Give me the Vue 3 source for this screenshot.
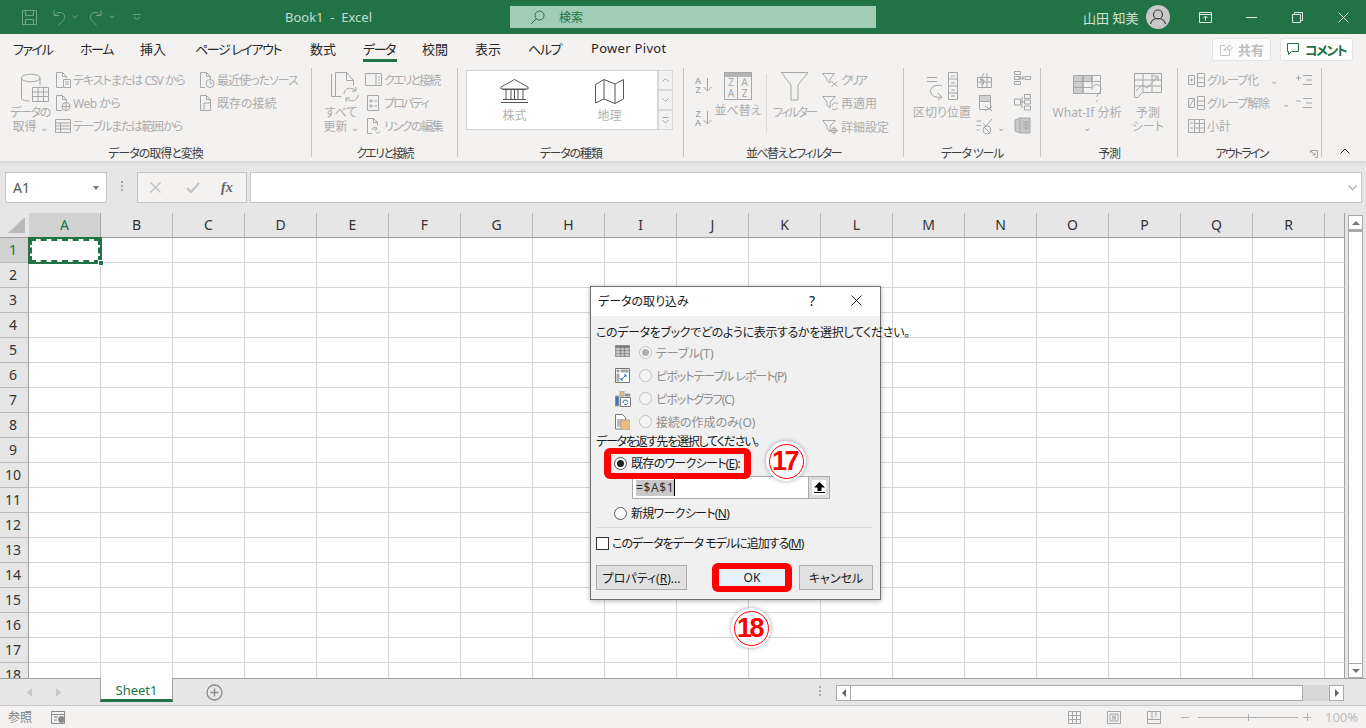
<script setup>
const cols = ['A','B','C','D','E','F','G','H','I','J','K','L','M','N','O','P','Q','R']
const rows = Array.from({ length: 18 }, (_, i) => i + 1)
const tabs = [
  { t: 'ファイル', w: 67, c: 'k15' }, { t: 'ホーム', w: 60, c: 'k15' }, { t: '挿入', w: 55, c: '' }, { t: 'ページ レイアウト', w: 115, c: 'k15' },
  { t: '数式', w: 53, c: '' }, { t: 'データ', w: 59, c: 'k15' }, { t: '校閲', w: 53, c: '' }, { t: '表示', w: 53, c: '' }, { t: 'ヘルプ', w: 63, c: 'k15' }, { t: 'Power Pivot', w: 80, c: 'lat' }
]
</script>

<template>
  <div class="app">
    <header class="title">
      <svg class="qs" width="17" height="17" viewBox="0 0 17 17"><path d="M1.5 1.5h14v14h-14zM4.500 1.500v5h8v-5M4.500 15.500v-5h8v5"/></svg>
      <svg class="qs m13" width="16" height="17" viewBox="0 0 16 17"><path d="M3 1.500v5h5M3.500 6.500C6 3 10 2.500 12.500 5c2.500 3 1 6.500-5 11"/></svg>
      <svg class="cv m4" width="6" height="4" viewBox="0 0 6 4"><path d="M.5.5 3 3 5.500.5"/></svg>
      <svg class="qs m10" width="16" height="17" viewBox="0 0 16 17"><path d="M13 1.500v5H8M12.500 6.500C10 3 6 2.500 3.500 5c-2.500 3-1 6.500 5 11"/></svg>
      <svg class="cv m4" width="6" height="4" viewBox="0 0 6 4"><path d="M.5.5 3 3 5.500.5"/></svg>
      <svg class="cv qat" width="8" height="6" viewBox="0 0 8 6"><path d="M.5.500h7M1 3l3 2.500L7 3"/></svg>
      <span class="book">Book1 &nbsp;-&nbsp; Excel</span>
      <div class="search">
        <svg width="15" height="15" viewBox="0 0 15 15"><circle cx="9.500" cy="5.500" r="4.500"/><path d="M6.300 8.700 1 14"/></svg>
        <span>検索</span>
      </div>
      <span class="user">山田 知美</span>
      <span class="avatar"><svg width="24" height="24" viewBox="0 0 24 24"><circle cx="12" cy="9.500" r="4.500"/><path d="M4.500 19c1-4 4-5.500 7.500-5.500s6.500 1.500 7.500 5.500"/></svg></span>
      <svg class="win w1" width="13" height="11" viewBox="0 0 13 11"><path d="M.5.500h12v10H.5zM.5 2.500h12M6.500 8.500v-4M4.500 6l2-2 2 2"/></svg>
      <svg class="win w2" width="11" height="11" viewBox="0 0 11 11"><path d="M0 5.500h11"/></svg>
      <svg class="win w3" width="11" height="11" viewBox="0 0 11 11"><path d="M.5 2.500h8v8h-8zM2.500 2.500v-2h8v8h-2"/></svg>
      <svg class="win w4" width="11" height="11" viewBox="0 0 11 11"><path d="M.5.500l10 10M10.500.500l-10 10"/></svg>
    </header>

    <nav class="tabs">
      <span v-for="(tab, i) in tabs" :key="tab.t" class="tab" :class="{ on: i === 5 }" :style="{ width: tab.w + 'px' }"><span class="tabt" :class="tab.c">{{ tab.t }}</span></span>
      <span class="grow"></span>
      <button class="share"><svg width="14" height="13" viewBox="0 0 14 13"><path d="M6 2.500H1.500v10h9V8M5 8c.5-3 3-4 5-4V1.500l3.500 3.500L10 8V6C8 6 6 6.500 5 8z"/></svg>共有</button>
      <button class="comment"><svg width="13" height="13" viewBox="0 0 13 13"><path d="M.5.500h11v8H4.500L1.500 11.500v-3h-1z"/></svg><span class="ct">コメント</span></button>
    </nav>

    <section class="ribbon">
      <div class="grp g1">
        <div class="body">
          <div class="big b1">
            <svg width="30" height="32" viewBox="0 0 30 32"><path d="M1.500 6v20c0 2 4 3 8 3M20 6v7M1.500 6c0-5 18.500-5 18.500 0s-18.500 5-18.500 0z"/><path d="M12.500 15.500h16v14h-16zM12.500 20h16M12.500 24.500h16M18 15.500v14M23.500 15.500v14"/></svg>
            <span class="k15">データの</span><span>取得 <i class="car">⌄</i></span>
          </div>
          <div class="col c1">
            <div class="rw k1"><svg width="16" height="16" viewBox="0 0 16 16"><path d="M8 15.500H1.500V.5h6l4 4v2M7.500.5v4h4M8.500 7.500h7v8h-7zM10 10h4M10 12h4"/></svg>テキストまたは CSV から</div>
            <div class="rw k05"><svg width="16" height="16" viewBox="0 0 16 16"><path d="M7 15.500H1.500V.5h6l4 4v3M7.500.5v4h4"/><circle cx="11" cy="11.500" r="4"/><path d="M7 11.500h8M11 7.500v8"/></svg>Web から</div>
            <div class="rw k15"><svg width="16" height="16" viewBox="0 0 16 16"><path d="M.5 1.500h15v13H.5zM.5 5h15M.5 8h15M.5 11h15M5.500 5v9.500"/></svg>テーブルまたは範囲から</div>
          </div>
          <div class="col c2">
            <div class="rw k1"><svg width="16" height="16" viewBox="0 0 16 16"><path d="M6 15.500H1.500V.5h6l4 4v3M7.500.5v4h4"/><circle cx="11" cy="11.500" r="4"/><path d="M11 9v2.500h2"/></svg>最近使ったソース</div>
            <div class="rw"><svg width="16" height="16" viewBox="0 0 16 16"><path d="M1.500 15.500V.5h6l4 4v11zM7.500.5v4h4M5 15.500V8h6.500"/></svg>既存の接続</div>
          </div>
        </div>
        <div class="lbl l1">データの取得と変換</div>
      </div>

      <div class="grp g2">
        <div class="body">
          <div class="big b2">
            <svg width="30" height="31" viewBox="0 0 30 31"><path d="M1.500 1.500v23H11M5.500 25V.5h11l7 8v5M16.500.5v8h7"/><path d="M14 22c0-6 8-8 12-3M28 23c0 6-8 8-12 3M26 15v4h-4M16 30v-4h4"/></svg>
            <span>すべて</span><span>更新 <i class="car">⌄</i></span>
          </div>
          <div class="col c3">
            <div class="rw k2"><svg width="17" height="14" viewBox="0 0 17 14"><path d="M.5.500h16v12H.5zM11 .5v12M13 4h2M13 7h2M13 10h2"/></svg>クエリと接続</div>
            <div class="rw k2"><svg width="17" height="16" viewBox="0 0 17 16"><path d="M2.500.5h11v15h-11zM5 5h2v2H5zM5 10h2v2H5zM9 6h3M9 11h3"/></svg>プロパティ</div>
            <div class="rw k15"><svg width="17" height="16" viewBox="0 0 17 16"><path d="M7 15.500H2.500V.5h6l4 4v3M8.500.5v4h4M7 12c0-3 3-3 4-1M15 13c0 2-3 3-4 1M9 9.500c2-1 3 0 3 1.500s-3 2-3 0"/></svg>リンクの編集</div>
          </div>
        </div>
        <div class="lbl l2">クエリと接続</div>
      </div>

      <div class="grp g3">
        <div class="body">
          <div class="gallery">
            <div class="gitems">
              <div class="gitem">
                <svg width="29" height="25" viewBox="0 0 29 25"><path d="M14.500.5 1 8v2h27V8zM3 10.500h23M6 11v9M11 11v9M14.500 11v9M18 11v9M23 11v9M3 20.500h23M1 23.500h27"/></svg>
                <span>株式</span>
              </div>
              <div class="gitem">
                <svg width="29" height="25" viewBox="0 0 29 25"><path d="M.5 5.500 9 .5 20 5l8.500-4.500V20L20 24.500 9 20 .5 24zM9 .5V20M20 5v19.500"/></svg>
                <span>地理</span>
              </div>
            </div>
            <div class="gscroll">
              <span><svg width="7" height="4" viewBox="0 0 7 4"><path d="M.5 3.500l3-3 3 3"/></svg></span>
              <span><svg width="7" height="4" viewBox="0 0 7 4"><path d="M.5.5l3 3 3-3"/></svg></span>
              <span><svg width="7" height="7" viewBox="0 0 7 7"><path d="M.5.5h6M.5 3l3 3 3-3"/></svg></span>
            </div>
          </div>
        </div>
        <div class="lbl">データの種類</div>
      </div>

      <div class="grp g4">
        <div class="body">
          <div class="azcol">
            <div class="az"><span class="azt">A<br>Z</span><svg width="9" height="14" viewBox="0 0 9 14"><path d="M4.500 0v13M.5 9l4 4 4-4"/></svg></div>
            <div class="az"><span class="azt">Z<br>A</span><svg width="9" height="14" viewBox="0 0 9 14"><path d="M4.500 0v13M.5 9l4 4 4-4"/></svg></div>
          </div>
          <div class="big b3">
            <span class="sorti"><span class="st"></span><span class="sg"><b>Z</b><b>A</b><b>A</b><b>Z</b></span></span>
            <span>並べ替え</span>
          </div>
          <span class="vsep"></span>
          <div class="big b4">
            <svg width="28" height="29" viewBox="0 0 28 29"><path d="M.5.500h26.500L17 13v15h-7V13z"/></svg>
            <span class="k2">フィルター</span>
          </div>
          <div class="col c4">
            <div class="rw k25"><svg width="17" height="16" viewBox="0 0 17 16"><path d="M.5 1.500h12L8 7v4L5 8.500V7zM9.500 9.500l6 5M15.500 9.500l-6 5"/></svg>クリア</div>
            <div class="rw"><svg width="17" height="16" viewBox="0 0 17 16"><path d="M.5 1.500h13L8 7v6L5 10V7zM10 11c0-3 4-4 6-2M15.500 13c-1 2-4 2-5.500 1"/></svg>再適用</div>
            <div class="rw"><svg width="17" height="16" viewBox="0 0 17 16"><path d="M.5 1.500h13L8 7v6L5 10V7z"/><circle cx="12" cy="11.500" r="2.500"/><path d="M12 7.500v8M8 11.500h8"/></svg>詳細設定</div>
          </div>
        </div>
        <div class="lbl l4">並べ替えとフィルター</div>
      </div>

      <div class="grp g5">
        <div class="body">
          <div class="big b5">
            <svg width="32" height="29" viewBox="0 0 32 29"><path d="M1 5.500h10M1 9.500h10M22.500.5h9v27h-9zM22.500 7h9M22.500 14h9M22.500 21h9M25 4h4M25 11h4M25 18h4M25 24h4M16 14c-7-2-13 1-11 7 1 3 5 5 10 4M12 21l4 4-4 3"/></svg>
            <span>区切り位置</span>
          </div>
          <div class="icol ic1">
            <div class="ir"><svg width="17" height="16" viewBox="0 0 17 16"><path d="M1.500 5.500h14v10h-14zM1.500 10h14M6 5.500v10M11 1v14.500M8 1 4 8h4l-1 5"/></svg></div>
            <div class="ir"><svg width="17" height="17" viewBox="0 0 17 17"><path d="M3.500.5h11v14h-11z"/><path fill="#cfcfcf" d="M3.500.5h11v6h-11z"/><path d="M9 11l7 5M16 11l-7 5"/></svg></div>
            <div class="ir"><svg width="17" height="17" viewBox="0 0 17 17"><path d="M.5 3h5M.5 7.500h5M.5 12h3M7 5l3 3 6-7"/><circle cx="11" cy="12" r="4"/><path d="M8 9l6 6"/></svg><i class="car c5">⌄</i></div>
          </div>
          <div class="icol ic2">
            <div class="ir"><svg width="17" height="15" viewBox="0 0 17 15"><path d="M.5.5h6v3h-6zM.5 5.500h6v3h-6zM.5 10.500h6v3h-6zM11 5.500h5.500v3H11zM4 7h6M8 5l2 2-2 2"/></svg></div>
            <div class="ir"><svg width="17" height="17" viewBox="0 0 17 17"><path d="M.5 5h6v6h-6zM10.500.5h6v4h-6zM10.500 6h6v4h-6zM10.500 12h6v4h-6zM6.500 8h4M8 3v11"/></svg></div>
            <div class="ir"><svg width="17" height="17" viewBox="0 0 17 17"><path fill="#c9c9c9" d="M1 3l5-2h10v15H6l-5-2z"/><path d="M6 1v15M9 5h6M9 8h6M9 11h6M12 5v8"/></svg></div>
          </div>
        </div>
        <div class="lbl">データ ツール</div>
      </div>

      <div class="grp g6">
        <div class="body">
          <div class="big b6">
            <svg width="30" height="28" viewBox="0 0 30 28"><path fill="#cdcdcd" d="M.5.500h9.500v18H.5zM10 .5h9v6h-9z"/><path d="M.5.500h27v18H.5zM.5 6.500h27M.5 12.500h18M10 .5v18M19 .5v11"/><path d="M19 15c0-7 9-7 9-1 0 4-4 4-4 8M24 25v2"/></svg>
            <span>What-If 分析</span><span class="car2">⌄</span>
          </div>
          <div class="big b7">
            <svg width="28" height="26" viewBox="0 0 28 26"><path d="M.5.500h27v19H8l-4 5H.5zM.5 7h27M.5 13h27M9 .5v19M18 .5v19"/><path d="M2 18l6-6 5 3 11-12M19 3h5v5"/></svg>
            <span>予測</span><span>シート</span>
          </div>
        </div>
        <div class="lbl">予測</div>
      </div>

      <div class="grp g7">
        <div class="body">
          <div class="col c7">
            <div class="rw k1"><svg width="17" height="16" viewBox="0 0 17 16"><path d="M.5 3.500h6v9h-6zM2 8h3M3.500 6.500v3M9.500 1.500h7v13h-7zM9.500 6h7M9.500 10.500h7"/></svg>グループ化<i class="car c6">⌄</i></div>
            <div class="rw k1"><svg width="17" height="16" viewBox="0 0 17 16"><path d="M.5 3.500h6v9h-6zM1 12l5-8M9.500 1.500h7v13h-7zM9.500 6h7M9.500 10.500h7"/></svg>グループ解除<i class="car c6">⌄</i></div>
            <div class="rw"><svg width="17" height="16" viewBox="0 0 17 16"><path d="M.5 1.500h6v13h-6zM2 5h3M2 10h3M6.500 5.500h10v9h-10zM6.500 10h10M11.500 1.500v13M6.500 1.500h10v4"/></svg>小計</div>
          </div>
          <div class="icol ic3">
            <div class="ir"><svg width="16" height="12" viewBox="0 0 16 12"><path d="M0 4h5M2.500 1.500v5M7 1.500h9M10 6h6M7 10.500h9"/></svg></div>
            <div class="ir"><svg width="16" height="12" viewBox="0 0 16 12"><path d="M0 4h5M7 1.500h9M10 6h6M7 10.500h9"/></svg></div>
          </div>
        </div>
        <div class="lbl l7">アウトライン<svg class="launch" width="8" height="8" viewBox="0 0 8 8"><path d="M.5 3V.5h7v7H5M1 1l4 4M5 2.500V5H2.500"/></svg></div>
      </div>
      <div class="collapse"><svg width="10" height="6" viewBox="0 0 10 6"><path d="M.5 5.500 5 1l4.500 4.500"/></svg></div>
    </section>

    <section class="fbar">
      <div class="namebox"><span>A1</span><i class="tri"></i></div>
      <div class="vdots"><i></i><i></i><i></i></div>
      <div class="fbtns">
        <svg width="11" height="11" viewBox="0 0 11 11"><path d="M.5.500l10 10M10.500.500l-10 10"/></svg>
        <svg class="ck" width="14" height="11" viewBox="0 0 14 11"><path d="M1 6l4 4 8-9"/></svg>
        <span class="fx">fx</span>
      </div>
      <div class="finput"><svg width="9" height="6" viewBox="0 0 9 6"><path d="M.5.500l4 4 4-4"/></svg></div>
    </section>

    <section class="work">
      <div class="grid">
        <div class="chead">
          <div class="corner"><i></i></div>
          <div v-for="c in cols" :key="c" class="ch" :class="{ sel: c === 'A' }">{{ c }}</div>
          <div class="ch end"></div>
        </div>
        <div v-for="r in rows" :key="r" class="row">
          <div class="rh" :class="{ sel: r === 1 }">{{ r }}</div>
          <div v-for="c in cols" :key="c" class="cell">
            <div v-if="r === 1 && c === 'A'" class="active"><i></i></div>
          </div>
          <div class="cell end"></div>
        </div>
      </div>
      <div class="vscroll">
        <span class="sbtn"><i class="up"></i></span>
        <span class="strack"></span>
        <span class="sbtn"><i class="dn"></i></span>
      </div>
    </section>

    <section class="tabbar">
      <svg class="nav n1" width="5" height="9" viewBox="0 0 5 9"><path d="M5 0v9L0 4.500z"/></svg>
      <svg class="nav n2" width="5" height="9" viewBox="0 0 5 9"><path d="M0 0v9l5-4.500z"/></svg>
      <div class="sheettab">Sheet1</div>
      <svg class="add" width="17" height="17" viewBox="0 0 17 17"><circle cx="8.500" cy="8.500" r="7.500"/><path d="M8.500 4.500v8M4.500 8.500h8"/></svg>
      <span class="grow"></span>
      <div class="vdots hd"><i></i><i></i><i></i></div>
      <div class="hscroll">
        <span class="hbtn"><i class="lf"></i></span>
        <span class="hthumb"></span>
        <span class="htrack"></span>
        <span class="hbtn"><i class="rt"></i></span>
      </div>
    </section>

    <footer class="status">
      <span class="ref">参照</span>
      <svg class="macro" width="15" height="13" viewBox="0 0 15 13"><path d="M.5.500h13v12H.5zM.5 3.500h13M3 6h4M3 9h3"/><circle cx="10.500" cy="8.500" r="3" fill="#8a8a8a"/></svg>
      <span class="grow"></span>
      <svg width="13" height="13" viewBox="0 0 13 13"><path d="M.5.500h12v12H.5zM.5 4.500h12M.5 8.500h12M4.500.5v12M8.500.5v12"/></svg>
      <svg class="mv" width="14" height="13" viewBox="0 0 14 13"><path d="M.5.500h13v12H.5zM3 3h8v7H3zM5 5h4M5 6.500h4M5 8h4"/></svg>
      <svg class="mv" width="14" height="13" viewBox="0 0 14 13"><path d="M.5.500h13v12H.5zM.5 8.500h13M5 .5v8M9 .5v5"/></svg>
      <div class="zoom">
        <i class="minus"></i>
        <span class="slider"><i></i></span>
        <i class="plus"></i>
      </div>
      <span class="pct">100%</span>
    </footer>

    <div class="dialog">
      <div class="dtitle">
        <span class="dt">データの取り込み</span>
        <span class="grow"></span>
        <span class="q">?</span>
        <svg width="11" height="11" viewBox="0 0 11 11"><path d="M.5.500l10 10M10.500.500l-10 10"/></svg>
      </div>
      <div class="dbody">
        <p class="dp first">このデータをブックでどのように表示するかを選択してください。</p>
        <div class="opt">
          <svg width="15" height="12" viewBox="0 0 15 12"><path fill="#767676" d="M0 0h15v12H0z"/><path fill="#f0f0f0" d="M1 3h4v2H1zM6 3h3v2H6zM10 3h4v2h-4zM1 6h4v2H1zM6 6h3v2H6zM10 6h4v2h-4zM1 9h4v2H1zM6 9h3v2H6zM10 9h4v2h-4z"/></svg>
          <span class="rad dis chk"></span><span>テーブル(T)</span>
        </div>
        <div class="opt k1">
          <svg width="15" height="15" viewBox="0 0 15 15"><path fill="#fff" stroke="#767676" d="M.5.500h14v14H.5z"/><path fill="#a8a8a8" d="M2 2h2v2H2zM6 2h7v2H6zM2 6h2v7H2z"/><path fill="none" stroke="#2b6cb0" d="M6 12l5-5M9 7h2v2M6 10v2h2"/></svg>
          <span class="rad dis"></span><span>ピボットテーブル レポート(P)</span>
        </div>
        <div class="opt k1">
          <svg width="16" height="16" viewBox="0 0 16 16"><path fill="#e8bf7a" d="M5 0h4v5H5z"/><path fill="#3f74b5" d="M0 5h4v10H0z"/><path fill="#767676" d="M10 3h5v2h-5z"/><path fill="#fff" stroke="#767676" d="M5.500 6.500h10v9h-10z"/><path fill="none" stroke="#2b6cb0" d="M8 12a2.500 2.500 0 0 1 5-1M13 12a2.500 2.500 0 0 1-4 1"/></svg>
          <span class="rad dis"></span><span>ピボットグラフ(C)</span>
        </div>
        <div class="opt">
          <svg width="15" height="16" viewBox="0 0 15 16"><path fill="#fff" stroke="#767676" d="M.5.500h7l3 3V15H.5z"/><path stroke="#767676" d="M2 6h6M2 8h6M2 10h6M2 12h5"/><path fill="#e8bf7a" d="M6 6h9v10H6z"/></svg>
          <span class="rad dis"></span><span>接続の作成のみ(O)</span>
        </div>
        <p class="dp second">データを返す先を選択してください。</p>
        <div class="sel1">
          <span class="rad chk2"></span><span>既存のワークシート(<u>E</u>):</span>
          <span class="redbox rb1"></span>
        </div>
        <div class="refinput">
          <div class="ri"><span class="hl">=$A$1</span><i class="caret"></i></div>
          <div class="rbtn"><span><svg width="11" height="11" viewBox="0 0 11 11"><path fill="#000" d="M5.500 0 11 5.500H7.500V9h-4V5.500H0zM0 10h11v1H0z"/></svg></span></div>
        </div>
        <div class="sel2">
          <span class="rad"></span><span>新規ワークシート(<u>N</u>)</span>
        </div>
        <div class="divider"></div>
        <div class="cb"><span class="box"></span><span>このデータをデータ モデルに追加する(<u>M</u>)</span></div>
        <div class="btns">
          <button class="btn b-prop">プロパティ(<u>R</u>)...</button>
          <button class="btn b-ok">OK<span class="redbox rb2"></span></button>
          <button class="btn b-cancel">キャンセル</button>
        </div>
      </div>
    </div>

    <div class="mark m17"><span class="ring">17</span></div>
    <div class="mark m18"><span class="ring">18</span></div>
  </div>
</template>

<style>
html, body { margin: 0; padding: 0; overflow: hidden; }
</style>

<style scoped>
.app { width: 1366px; height: 728px; position: relative; overflow: hidden; background: #e6e6e6; display: flex; flex-direction: column; font-family: "Noto Sans", "Noto Sans CJK JP", sans-serif; font-feature-settings: "palt"; font-size: 12px; color: #262626; }
i { font-style: normal; display: block; }
.grow { flex: 1; }
svg { flex: none; display: block; fill: none; stroke: #a6a6a6; stroke-width: 1; }
.k05 { letter-spacing: -.5px; }
.k1 { letter-spacing: -1px; }
.k15 { letter-spacing: -1.400px; }
.k2 { letter-spacing: -1.900px; }
.k25 { letter-spacing: -2.500px; }
.lat { letter-spacing: .3px; }

.title { height: 34px; flex: none; background: #217346; display: flex; align-items: center; padding-left: 21px; color: #c3dccf; }
.title svg { stroke: #6ea58a; }
.m13 { margin-left: 13px; }
.m4 { margin-left: 5px; }
.m10 { margin-left: 10px; }
.qat { margin-left: 18px; }
.book { width: 372px; margin-left: -3px; text-align: right; padding-right: 138px; box-sizing: border-box; font-size: 13px; white-space: nowrap; }
.search { width: 366px; height: 22px; background: #a0cdb3; display: flex; align-items: center; padding-left: 20px; box-sizing: border-box; color: #217346; font-size: 12px; }
.title .search svg { stroke: #217346; margin-right: 14px; }
.user { margin-left: 207px; font-size: 13px; width: 52px; white-space: nowrap; color: #d2e4da; }
.avatar { width: 24px; height: 24px; border-radius: 50%; background: #c8c8c8; margin-left: 11px; }
.title .avatar svg { stroke: #444; stroke-width: 1.200; }
.title .win { stroke: #dfece5; }
.w1 { margin-left: 29px; }
.w2 { margin-left: 34px; }
.w3 { margin-left: 35px; }
.w4 { margin-left: 35px; }

.tabs { height: 32px; flex: none; background: #f3f2f1; display: flex; padding-right: 13px; font-size: 13px; align-items: stretch; }
.tab { flex: none; padding-left: 13px; box-sizing: border-box; white-space: nowrap; padding-top: 5px; color: #262626; }
.tabt { display: inline-block; height: 23px; }
.tab.on .tabt { border-bottom: 3px solid #217346; box-sizing: border-box; color: #262626; width: 34px; }
.share, .comment { font: inherit; font-weight: 700; font-feature-settings: "palt"; height: 23px; margin-top: 4px; padding: 0; display: flex; align-items: center; justify-content: center; gap: 5px; box-sizing: border-box; border: 1px solid #e3e3e3; background: #fbfbfb; border-radius: 2px; }
.share { width: 59px; color: #bdbdbd; margin-right: 9px; }
.share svg { stroke: #c4c4c4; }
.comment { width: 73px; color: #217346; background: #fff; }
.comment svg { stroke: #217346; }
.ct { letter-spacing: -1.500px; }

.ribbon { height: 95px; flex: none; background: #f3f2f1; display: flex; padding-top: 2px; box-sizing: border-box; color: #acacac; box-shadow: 0 2px 3px rgba(0,0,0,.08); position: relative; z-index: 1; }
.grp { height: 89px; flex: none; display: flex; flex-direction: column; border-right: 1px solid #c6c6c6; box-sizing: border-box; }
.g1 { width: 312px; }
.g2 { width: 146px; }
.g3 { width: 226px; }
.g4 { width: 220px; }
.g5 { width: 137px; }
.g6 { width: 137px; }
.g7 { width: 144px; }
.body { height: 74px; flex: none; display: flex; align-items: flex-start; white-space: nowrap; }
.lbl { height: 16px; flex: none; line-height: 16px; color: #3f3f3f; text-align: center; margin-top: 4px; position: relative; white-space: nowrap; letter-spacing: -1.200px; }
.l1 { letter-spacing: -1px; }
.l2 { letter-spacing: -1.700px; }
.l4 { letter-spacing: -1.500px; }
.l7 { letter-spacing: -1.800px; padding-right: 16px; }
.launch { position: absolute; right: 3px; top: 4px; }
.big { display: flex; flex-direction: column; align-items: center; line-height: 14px; flex: none; padding-top: 4px; box-sizing: border-box; }
.big svg, .sorti { margin-bottom: 5px; }
.b1 { width: 42px; margin-left: 9px; }
.b1 svg { margin-left: 10px; margin-bottom: 2px; }
.b2 { width: 38px; margin-left: 10px; }
.b2 svg { margin-left: 8px; margin-bottom: 3px; }
.car { display: inline-block; font-size: 10px; line-height: 8px; }
.col { display: flex; flex-direction: column; flex: none; }
.rw { height: 23px; display: flex; align-items: center; gap: 2px; white-space: nowrap; position: relative; }
.rw svg { stroke: #a8a8a8; }
.c1 { margin-left: 4px; width: 144px; }
.c2 { margin-left: 0; }
.c3 { margin-left: 5px; }
.gallery { display: flex; margin: 2px 0 0 8px; }
.gitems { width: 192px; height: 60px; background: #fff; border: 1px solid #d3d3d3; box-sizing: border-box; display: flex; }
.gitem { width: 95px; display: flex; flex-direction: column; align-items: center; padding-top: 8px; color: #b2b2b2; line-height: 14px; gap: 5px; }
.gitem svg { stroke: #555; }
.gscroll { width: 15px; display: flex; flex-direction: column; }
.gscroll span { height: 20px; border: 1px solid #d8d8d8; background: #f3f2f1; box-sizing: border-box; display: flex; align-items: center; justify-content: center; }
.azcol { margin: 8px 0 0 11px; display: flex; flex-direction: column; gap: 15px; width: 17px; }
.az { display: flex; align-items: center; gap: 2px; }
.azt { font-size: 9px; line-height: 9px; font-weight: 600; color: #a8a8a8; width: 8px; text-align: center; }
.b3 { width: 44px; margin-left: 4px; }
.sorti { width: 28px; height: 28px; margin-bottom: 4px; border: 1px solid #a8a8a8; box-sizing: border-box; display: flex; flex-direction: column; flex: none; }
.st { height: 4px; background: #b4b4b4; flex: none; }
.sg { display: grid; grid-template-columns: 1fr 1fr; font-size: 10px; line-height: 11px; text-align: center; color: #a8a8a8; }
.sg b { font-weight: 400; }
.sg b:nth-child(odd) { border-right: 1px solid #a8a8a8; }
.vsep { width: 1px; height: 59px; margin: 6px 0 0 6px; background: #dadada; flex: none; }
.b4 { width: 43px; margin-left: 6px; }
.c4 { margin-left: 6px; }
.c4 .rw { height: 23.500px; }
.b5 { width: 56px; margin-left: 10px; }
.icol { display: flex; flex-direction: column; }
.ic1 { margin-left: 6px; width: 38px; }
.ir { height: 23.500px; display: flex; align-items: center; gap: 2px; }
.c5 { margin-left: 2px; }
.ic2 { margin-top: -1px; }
.b6 { width: 74px; margin-left: 9px; padding-top: 7px; }
.b6 svg { margin: 0 0 3px 2px; }
.b7 { width: 40px; margin-left: 4px; padding-top: 5px; }
.b7 svg { margin-bottom: 7px; }
.car2 { line-height: 8px; font-size: 10px; margin-top: 3px; }
.c7 { margin-left: 10px; width: 108px; }
.c6 { position: absolute; font-size: 10px; letter-spacing: 0; }
.c7 .rw:nth-child(1) .c6 { left: 82px; }
.c7 .rw:nth-child(2) .c6 { left: 94px; }
.collapse { flex: 1; display: flex; align-items: flex-end; justify-content: center; padding-bottom: 3px; padding-left: 2px; box-sizing: border-box; height: 89px; }
.collapse svg { stroke: #333; }

.fbar { height: 52px; flex: none; background: #e6e6e6; display: flex; padding-top: 11px; box-sizing: border-box; }
.namebox { width: 102px; height: 31px; margin-left: 5px; background: #fff; border: 1px solid #c6c6c6; box-sizing: border-box; display: flex; align-items: center; justify-content: space-between; padding: 0 7px; font-size: 14px; color: #555; }
.tri { width: 0; height: 0; border-left: 3.500px solid transparent; border-right: 3.500px solid transparent; border-top: 4px solid #777; }
.vdots { display: flex; flex-direction: column; gap: 2px; width: 2px; height: 12px; margin: 9px 14px 0; flex: none; }
.vdots i { width: 2px; height: 2px; background: #a6a6a6; }
.fbtns { width: 110px; height: 31px; background: #f3f2f1; border: 1px solid #c6c6c6; box-sizing: border-box; display: flex; align-items: center; padding-left: 12px; }
.fbtns svg { stroke: #c2c2c2; stroke-width: 1.400; }
.fbtns .ck { margin-left: 25px; stroke-width: 2; }
.fx { font-family: "Liberation Serif", serif; font-style: italic; font-weight: 700; font-size: 14px; color: #666; margin-left: 21px; }
.finput { flex: none; width: 1112px; height: 31px; margin-left: 3px; background: #fff; border: 1px solid #c6c6c6; box-sizing: border-box; display: flex; align-items: center; justify-content: flex-end; padding-right: 4px; }
.finput svg { stroke: #bdbdbd; stroke-width: 1.600; }

.work { height: 465px; flex: none; display: flex; overflow: hidden; }
.grid { width: 1345px; flex: none; overflow: hidden; background: #fff; }
.chead { height: 25px; display: flex; background: #e6e6e6; border-bottom: 1px solid #9f9f9f; box-sizing: border-box; }
.corner { width: 29px; box-sizing: border-box; position: relative; flex: none; }
.corner i { position: absolute; right: 4px; bottom: 4px; width: 0; height: 0; border-left: 17px solid transparent; border-bottom: 16px solid #b9b9b9; }
.ch { width: 72px; flex: none; text-align: center; line-height: 24px; font-size: 14px; color: #333; border-right: 1px solid #b8b8b8; box-sizing: border-box; }
.ch.sel { background: #d2d2d2; color: #217346; border-right-color: #a8a8a8; }
.ch.end { width: 20px; border-right: 1px solid #9f9f9f; }
.row { display: flex; height: 25px; }
.rh { width: 29px; flex: none; box-sizing: border-box; background: #e6e6e6; border-right: 1px solid #9f9f9f; border-bottom: 1px solid #b8b8b8; text-align: center; font-size: 14px; line-height: 23px; color: #333; padding-right: 2px; }
.rh.sel { background: #d2d2d2; color: #217346; }
.cell { width: 72px; flex: none; box-sizing: border-box; border-right: 1px solid #d6d6d6; border-bottom: 1px solid #d6d6d6; position: relative; }
.cell.end { width: 20px; border-right: 1px solid #9f9f9f; }
.active { position: absolute; left: -1px; top: -1px; width: 74px; height: 27px; box-sizing: border-box; border: 2px solid #217346; background: #fff; z-index: 1; }
.active::before { content: ""; position: absolute; inset: 0; border: 2px dashed #217346; box-sizing: border-box; }
.active i { position: absolute; right: -4px; bottom: -4px; width: 6px; height: 6px; background: #217346; border: 1px solid #fff; box-sizing: border-box; }

.vscroll { width: 21px; flex: none; display: flex; flex-direction: column; padding: 2px 3px 0 3px; box-sizing: border-box; align-items: stretch; }
.sbtn { height: 15px; border: 1px solid #a9a9a9; background: #fff; box-sizing: border-box; display: flex; align-items: center; justify-content: center; flex: none; }
.strack { flex: 1; background: #fff; border: 1px solid #a9a9a9; border-top: 2px solid #a9a9a9; border-bottom: 0; box-sizing: border-box; }
.up { border-left: 4px solid transparent; border-right: 4px solid transparent; border-bottom: 4px solid #777; }
.dn { border-left: 4px solid transparent; border-right: 4px solid transparent; border-top: 4px solid #777; }

.tabbar { height: 28px; flex: none; background: #e6e6e6; border-top: 1px solid #9f9f9f; border-bottom: 1px solid #c6c6c6; box-sizing: border-box; display: flex; align-items: flex-start; }
.tabbar .nav { fill: #c4c4c4; stroke: none; margin-top: 9px; }
.n1 { margin-left: 27px; }
.n2 { margin-left: 24px; }
.sheettab { width: 73px; height: 24px; margin-left: 39px; margin-top: -1px; background: #fff; border: 1px solid #9f9f9f; border-top: 0; border-bottom: 3px solid #217346; box-sizing: border-box; text-align: center; font-size: 13px; line-height: 24px; color: #217346; }
.add { margin: 5px 0 0 33px; stroke: #8a8a8a; stroke-width: 1.300; }
.hd { margin: 7px 15px 0 0; }
.hscroll { width: 508px; height: 16px; margin: 6px 22px 0 0; display: flex; flex: none; }
.hbtn { width: 15px; height: 16px; flex: none; background: #fff; border: 1px solid #a9a9a9; box-sizing: border-box; display: flex; align-items: center; justify-content: center; }
.lf { border-top: 4px solid transparent; border-bottom: 4px solid transparent; border-right: 4px solid #666; }
.rt { border-top: 4px solid transparent; border-bottom: 4px solid transparent; border-left: 4px solid #666; }
.hthumb { width: 452px; background: #fff; border: 1px solid #a9a9a9; border-left: 0; box-sizing: border-box; flex: none; }
.htrack { flex: 1; background: #d8d8d8; }

.status { height: 22px; flex: none; background: #f3f2f1; display: flex; align-items: center; padding-left: 8px; color: #7c7c7c; padding-right: 9px; }
.ref { width: 43px; font-size: 12px; }
.macro { stroke: #8a8a8a; }
.mv { margin-left: 26px; }
.zoom { display: flex; align-items: center; margin-left: 20px; }
.minus { width: 8px; height: 1px; background: #b0b0b0; }
.slider { width: 100px; height: 1px; background: #b0b0b0; margin: 0 5px 0 9px; position: relative; display: block; }
.slider i { position: absolute; left: 50px; top: -3px; width: 1px; height: 7px; background: #b0b0b0; }
.plus { width: 8px; height: 8px; background: linear-gradient(#b0b0b0,#b0b0b0) center/8px 1px no-repeat, linear-gradient(#b0b0b0,#b0b0b0) center/1px 8px no-repeat; }
.pct { width: 32px; margin-left: 14px; color: #bdbdbd; font-size: 13px; white-space: nowrap; }

.dialog { position: absolute; left: 590px; top: 286px; width: 291px; height: 314px; box-sizing: border-box; background: #f0f0f0; border: 1px solid #6f6f6f; box-shadow: 0 1px 5px rgba(0,0,0,.3); z-index: 5; color: #1a1a1a; display: flex; flex-direction: column; }
.dtitle { height: 29px; flex: none; background: #fff; display: flex; align-items: center; padding: 0 18px 2px 7px; box-sizing: border-box; }
.dtitle svg { stroke: #222; }
.q { font-size: 14px; margin-right: 36px; }
.dbody { padding: 9px 5px 0; flex: 1; }
.dp { margin: 0; line-height: 16px; white-space: nowrap; }
.first { letter-spacing: -.35px; }
.opt { height: 23px; display: flex; align-items: center; color: #8e8e8e; position: relative; padding-left: 43px; box-sizing: border-box; }
.opt svg { position: absolute; left: 19px; top: 4px; }
.opt span:last-child { margin-left: 4px; white-space: nowrap; }
.rad { width: 13px; height: 13px; border-radius: 50%; border: 1px solid #555; background: #fff; box-sizing: border-box; flex: none; display: flex; align-items: center; justify-content: center; }
.rad.dis { border-color: #c2c2c2; background: #f4f4f4; }
.rad.chk::after { content: ""; width: 7px; height: 7px; border-radius: 50%; background: #b0b0b0; }
.rad.chk2::after { content: ""; width: 7px; height: 7px; border-radius: 50%; background: #222; }
.second { margin-top: 1px; letter-spacing: -1.200px; }
.sel1, .sel2 { height: 16px; display: flex; align-items: center; gap: 4px; padding-left: 18px; position: relative; white-space: nowrap; letter-spacing: -.7px; }
.sel1 { margin-top: 5px; }
.sel2 { margin-top: 6px; }
.redbox { position: absolute; box-sizing: border-box; border-color: #f00; border-style: solid; border-radius: 6px; pointer-events: none; }
.rb1 { left: 8px; top: -7px; width: 147px; height: 31px; border-width: 6px 7px; }
.rb2 { left: -4px; top: -3px; right: -4px; bottom: -3px; border-width: 6px 7px; }
.refinput { margin: 5px 0 0 36px; display: flex; height: 23px; width: 198px; }
.ri { width: 177px; box-sizing: border-box; background: #fff; border: 1px solid #ababab; display: flex; align-items: center; padding-left: 3px; color: #333; }
.hl { background: #c8c8c8; line-height: 16px; letter-spacing: .6px; }
.caret { width: 1px; height: 17px; background: #000; }
.rbtn { width: 21px; background: #dcdcdc; border: 1px solid #ababab; border-left: 0; box-sizing: border-box; padding: 3px; display: flex; }
.rbtn span { flex: 1; background: #fff; display: flex; align-items: center; justify-content: center; }
.rbtn svg { stroke: none; }
.divider { height: 1px; margin-top: 6px; background: #dcdcdc; margin-right: 2px; }
.cb { height: 16px; margin-top: 7px; display: flex; align-items: center; gap: 3px; white-space: nowrap; letter-spacing: -1px; }
.box { width: 13px; height: 13px; border: 1px solid #333; background: #fff; box-sizing: border-box; flex: none; }
.btns { display: flex; margin-top: 14px; }
.btn { font: inherit; font-feature-settings: "palt"; height: 25px; padding: 0; background: #e1e1e1; border: 1px solid #adadad; color: #1a1a1a; box-sizing: border-box; position: relative; flex: none; }
.b-prop { width: 91px; }
.b-ok { width: 74px; margin-left: 28px; background: #e5f1fb; border-color: #0078d7; }
.b-cancel { width: 74px; margin-left: 10px; }

.mark { position: absolute; width: 40px; height: 40px; border-radius: 50%; background: #fff; box-shadow: 0 0 4px rgba(0,0,0,.35); display: flex; align-items: center; justify-content: center; z-index: 6; }
.m17 { left: 766px; top: 441px; }
.m18 { left: 731px; top: 608px; }
.ring { width: 35px; height: 35px; border-radius: 50%; border: 1.500px solid #f00; box-sizing: border-box; display: flex; align-items: center; justify-content: center; color: #f00; font-family: "Liberation Sans", sans-serif; font-weight: 700; font-size: 27px; letter-spacing: -2.500px; padding-right: 3px; }
</style>
